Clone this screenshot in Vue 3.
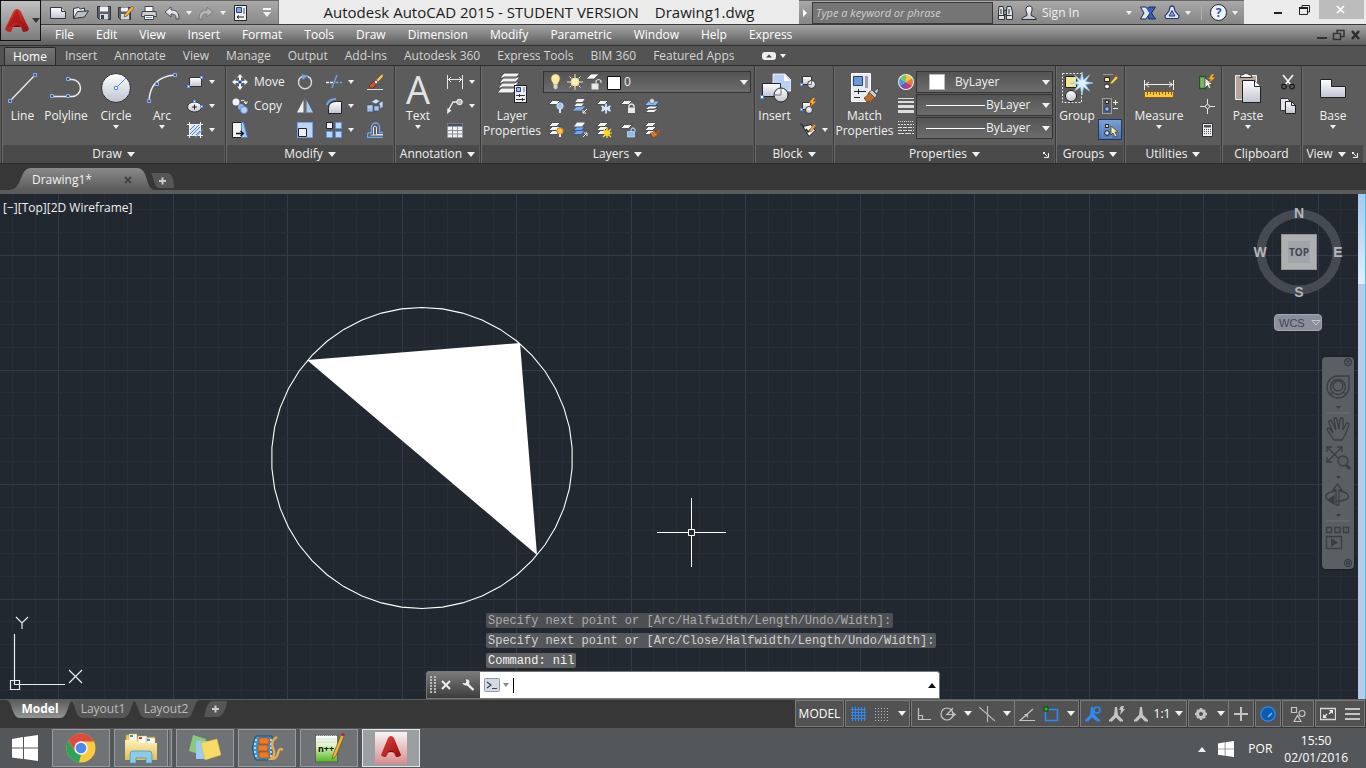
<template>
  <div class="desktop">
    <header class="top">
      <button class="app-button" aria-label="Application menu">
        <svg class="app-logo"><use href="#i-logo" /></svg>
        <span class="caret dark"></span>
      </button>
      <div class="top-rows">
        <div class="title-row">
          <div class="quick">
            <button v-for="q in quickTools" :key="q.icon" :class="['quick-btn', { 'with-caret': q.caret }]" :aria-label="q.name">
              <svg class="ic"><use :href="'#i-' + q.icon" /></svg>
              <span v-if="q.caret" class="caret small"></span>
            </button>
            <button class="quick-more" aria-label="Customize toolbar"><span class="bar"></span><span class="caret"></span></button>
          </div>
          <h1 class="title"><span>Autodesk AutoCAD 2015 - STUDENT VERSION</span><span>Drawing1.dwg</span></h1>
          <div class="info">
            <span class="info-toggle"></span>
            <input class="search" type="text" placeholder="Type a keyword or phrase" aria-label="Search" />
            <button class="info-btn" aria-label="Find"><svg class="ic"><use href="#i-find" /></svg></button>
            <button class="sign-in"><svg class="ic"><use href="#i-user" /></svg><span>Sign In</span><span class="caret small"></span></button>
            <button class="info-btn" aria-label="Exchange"><svg class="ic"><use href="#i-exchange" /></svg></button>
            <button class="info-btn wide" aria-label="Stay connected"><svg class="ic"><use href="#i-a360" /></svg><span class="caret small"></span></button>
            <span class="info-sep"></span>
            <button class="info-btn wide" aria-label="Help"><span class="help">?</span><span class="caret small"></span></button>
          </div>
          <div class="win-buttons">
            <button aria-label="Minimize"><svg class="ic"><path d="M4 10h8v2H4z" fill="#222" /></svg></button>
            <button aria-label="Restore"><svg class="ic"><path d="M3.500 5.500h8v7h-8zM6 5V3.500h7.500V10H12" fill="none" stroke="#222" /><path d="M3 5h9v2H3z" fill="#222" /></svg></button>
            <button class="close" aria-label="Close"><svg class="ic"><path d="M4 4l7 7M11 4l-7 7" stroke="#fff" stroke-width="1.600" /></svg></button>
          </div>
        </div>
        <nav class="menu-row">
          <a v-for="m in menus" :key="m" href="#">{{ m }}</a>
          <div class="mdi">
            <svg viewBox="0 0 44 12"><path d="M0 8h10v2H0z" fill="#333" /><path d="M16.500 4.500h7v6h-7zM20 4V1.500h7v6h-3" fill="none" stroke="#333" stroke-width="1.500" /><path d="M35 2l7 8M42 2l-7 8" stroke="#2c2c2c" stroke-width="2.500" /></svg>
          </div>
        </nav>
      </div>
    </header>

    <nav class="ribbon-tabs">
      <a v-for="(t, i) in ribbonTabs" :key="t" href="#" :class="{ active: i === 0 }">{{ t }}</a>
      <button class="ribbon-min" aria-label="Minimize ribbon">
        <svg viewBox="0 0 14 8"><rect width="14" height="8" rx="3" fill="#eee" /><path d="M4 5.500l3-3 3 3z" fill="#444" /></svg>
        <span class="caret small"></span>
      </button>
    </nav>

    <section class="ribbon">
      <div v-for="p in panels" :key="p.name" :class="['panel', p.id]">
        <div class="panel-body">
          <template v-for="(part, n) in p.parts" :key="n">
            <button v-if="part.big" class="big">
              <span v-if="part.big === 'text'" class="glyph">A</span>
              <svg v-else class="ic-big"><use :href="'#b-' + part.big" /></svg>
              <span class="big-label">{{ part.label }}</span>
              <span v-if="part.caret" class="caret small"></span>
            </button>
            <div v-else-if="part.col" class="col">
              <button v-for="c in part.col" :key="c.icon" :class="['tool', { on: c.on }]" :aria-label="c.icon">
                <svg class="ic"><use :href="'#i-' + c.icon" /></svg>
                <span v-if="c.label">{{ c.label }}</span>
                <span v-if="c.caret" class="caret small"></span>
              </button>
            </div>
            <div v-else-if="part.layers" class="layer-tools">
              <div class="combo">
                <svg class="layer-state"><use href="#layer-state" /></svg>
                <select aria-label="Layer"><option>0</option></select>
                <span class="caret"></span>
              </div>
              <div class="layer-grid">
                <button v-for="l in layerTools" :key="l" class="tool" :aria-label="l">
                  <svg class="ic"><use :href="'#i-' + l" /></svg>
                </button>
              </div>
            </div>
            <div v-else class="props">
              <div v-for="r in propRows" :key="r.icon" class="prop">
                <svg class="ic"><use :href="'#i-' + r.icon" /></svg>
                <div class="combo">
                  <span :class="r.sample"></span>
                  <select :aria-label="r.name"><option>ByLayer</option></select>
                  <span class="caret"></span>
                </div>
              </div>
            </div>
          </template>
        </div>
        <div class="panel-title">
          <span>{{ p.name }}</span>
          <span v-if="!p.plain" class="caret"></span>
          <svg v-if="p.launcher" class="launcher" viewBox="0 0 6 6"><path d="M0 .5h2M.5 0v2M1 1l3.500 3.500M5.500 1v4.500H1" fill="none" stroke="#eee" /></svg>
        </div>
      </div>
    </section>

    <div class="file-tabs">
      <button class="file-tab">
        <svg class="shape" viewBox="0 0 146 22" preserveAspectRatio="none"><path d="M0 22C14 22 10 0 22 0H128C140 0 136 22 146 22z" fill="url(#g-tab)" /></svg>
        <span>Drawing1*</span>
        <svg class="tab-close" viewBox="0 0 8 8"><path d="M1 1l6 6M7 1L1 7" stroke="#444" stroke-width="2" /></svg>
      </button>
      <button class="new-tab" aria-label="New drawing">
        <svg viewBox="0 0 24 15"><path d="M0 0H16C21 0 23 6 23 15H8C3 15 3 5 0 0z" fill="#565656" /><path d="M8 8h7M11.500 4.500v7" stroke="#ccc" stroke-width="2" /></svg>
      </button>
    </div>

    <main class="canvas">
      <svg class="drawing">
        <g shape-rendering="crispEdges">
          <line v-for="g in gridX" :key="'x' + g.at" :x1="g.at" :x2="g.at" y1="0" y2="100%" :stroke="g.major ? '#343a4a' : '#282e39'" />
          <line v-for="g in gridY" :key="'y' + g.at" :y1="g.at" :y2="g.at" x1="0" x2="100%" :stroke="g.major ? '#343a4a' : '#282e39'" />
        </g>
        <polygon :points="circlePoints" fill="none" stroke="#fff" stroke-width="1.100" />
        <polygon points="307,166 520,149 537,361" fill="#fff" />
        <path d="M657 338.500H688M695 338.500H726M691.500 304V335M691.500 342V373M688.500 335.500h6v6h-6z" fill="none" stroke="#fff" />
      </svg>
      <button class="view-label">[−][Top][2D Wireframe]</button>

      <svg class="ucs" viewBox="0 0 90 84"><path d="M14.500 19V70M14 69.500H65M10.500 65.500h9v9h-9z M16 2l6 6 6-6M22 8v6M69 55l13 13M82 55L69 68" fill="none" stroke="#e8ecec" stroke-width="1.200" /></svg>

      <div class="view-cube">
        <svg viewBox="0 0 100 94">
          <circle cx="50" cy="47" r="38" fill="none" stroke="#464b53" stroke-width="9" />
          <rect x="32.500" y="29.500" width="35" height="35" fill="#adb0b1" stroke="#8f9394" />
          <rect x="39" y="36" width="22" height="22" fill="#9fa5aa" />
          <text x="50" y="51" class="cube-face">TOP</text>
          <text x="50" y="13" class="compass">N</text>
          <text x="50" y="92" class="compass">S</text>
          <text x="11" y="52" class="compass">W</text>
          <text x="89" y="52" class="compass">E</text>
        </svg>
        <button class="wcs">WCS<svg viewBox="0 0 10 6"><path d="M1 .5h8L5 5z" fill="none" stroke="#c5c7d0" /></svg></button>
      </div>

      <div class="nav-bar">
        <svg viewBox="0 0 32 212" fill="none" stroke="#393e45" stroke-width="1.300">
          <circle cx="26" cy="5" r="3.500" /><path d="M24.500 3.500l3 3M27.500 3.500l-3 3" />
          <path d="M5 30a11 11 0 0 1 11-11h11v11a11 11 0 0 1-22 0z" /><circle cx="16" cy="30" r="7.500" /><circle cx="16" cy="29" r="5" /><path d="M11 35l-3 3M21 35l3 3" />
          <path d="M14 49h5l-2.500 3z" fill="#393e45" stroke="none" />
          <path d="M4 56h24M4 164h24" stroke="#6b7075" stroke-width="1" />
          <path d="M12 83L6 74c-2-3 0-4 2-2l3 4-4-10c-1-3 2-4 3-1l4 8-2-10c0-3 3-3 3 0l2 9 1-9c0-3 3-3 3 0v10l3-6c1-2 4-1 3 1l-4 10-3 5z" />
          <path d="M5 90l15 15M20 90L5 105M5 95v-5h5M15 90h5v5M5 100v5h5" /><circle cx="21" cy="104" r="5" fill="#575c60" /><path d="M24 108l4 4" stroke-width="3" />
          <path d="M14 119h5l-2.500 3z" fill="#393e45" stroke="none" />
          <path d="M14 148v-15h-3l4.500-6 4.500 6h-3v15z" /><path d="M14 134c-14 2-12 9-3 10M18 134c12 2 12 10-4 10" /><path d="M6 143l6-4v8z" fill="#393e45" />
          <path d="M14 157h5l-2.500 3z" fill="#393e45" stroke="none" />
          <path d="M4.500 170.500h5v5h-5zM13 170.500h5v5h-5zM21.500 170.500h5v5h-5zM4.500 179.500h15v12h-15z" /><path d="M9 181l7 4.500-7 4.500z" fill="#393e45" stroke="none" />
          <circle cx="26" cy="206" r="3.500" /><path d="M24 205h4M24 207h4" />
        </svg>
      </div>

      <div class="command">
        <p v-for="(h, i) in history" :key="h" :class="['history', 'age' + i]">{{ h }}</p>
        <div class="command-bar">
          <div class="command-handle">
            <svg class="grip" viewBox="0 0 6 18"><path d="M1 0v18M5 0v18" stroke="#bbb" stroke-width="2" stroke-dasharray="2 1" /></svg>
            <svg class="cmd-x" viewBox="0 0 10 10"><path d="M1 1l8 8M9 1L1 9" stroke="#eee" stroke-width="2" /></svg>
            <svg class="ic"><use href="#i-wrench" /></svg>
          </div>
          <svg class="prompt" viewBox="0 0 16 14"><rect x=".5" y=".5" width="15" height="13" rx="1" fill="#d5dbe3" stroke="#8f9aa8" /><path d="M3 4l4 3-4 3M8 10.500h5" fill="none" stroke="#3d4654" stroke-width="1.200" /></svg>
          <span class="caret small grey"></span>
          <span class="text-cursor"></span>
          <input type="text" aria-label="Command line" />
          <span class="caret up"></span>
        </div>
      </div>
      <div class="window-edge"></div>
    </main>

    <footer class="status">
      <div class="layout-tabs">
        <button v-for="(l, i) in layouts" :key="l" :class="['layout-tab', { active: i === 0 }]">
          <svg class="shape" viewBox="0 0 68 18" preserveAspectRatio="none"><path d="M0 0C7 0 5 18 14 18H54C63 18 61 0 68 0z" :fill="i === 0 ? 'url(#g-model)' : '#565656'" /></svg>
          <span>{{ l }}</span>
        </button>
        <button class="new-layout" aria-label="New layout">
          <svg viewBox="0 0 24 17"><path d="M9 0H24C23 8 20 16 14 16H1C3 10 3 2 9 0z" fill="#565656" /><path d="M9 8h7M12.500 4.500v7" stroke="#ccc" stroke-width="2" /></svg>
        </button>
      </div>
      <div class="status-groups">
        <div v-for="(g, i) in statusGroups" :key="i" class="status-group">
          <template v-for="(s, k) in g" :key="k">
            <span v-if="s === '|'" class="divider"></span>
            <button v-else-if="s === 'v'" class="drop" aria-label="More"><span class="caret"></span></button>
            <button v-else-if="s.text" :class="['status-text', { narrow: s.text === '1:1' }]">{{ s.text }}</button>
            <button v-else :class="['status-btn', s]" :aria-label="s"><svg class="ic"><use :href="'#s-' + s" /></svg></button>
          </template>
        </div>
      </div>
    </footer>

    <footer class="taskbar">
      <button class="start" aria-label="Start"><svg viewBox="0 0 26 26"><use href="#i-windows" /></svg></button>
      <div class="tasks">
        <button v-for="t in tasks" :key="t" :class="['task', t]" :aria-label="t">
          <svg viewBox="0 0 32 32">
            <use :href="'#t-' + t" />
            <text v-if="t === 'notepad'" x="13" y="20" class="notepad-text">n++</text>
          </svg>
        </button>
      </div>
      <div class="tray">
        <span class="caret up light"></span>
        <svg class="ic" viewBox="0 0 26 26"><use href="#i-windows" /></svg>
        <span class="lang">POR</span>
        <div class="clock"><time>15:50</time><time>02/01/2016</time></div>
      </div>
    </footer>

    <svg class="defs" aria-hidden="true">
      <defs>
        <linearGradient id="g-white" x2="0" y2="1"><stop stop-color="#fff" /><stop offset="1" stop-color="#bfc4d2" /></linearGradient>
        <linearGradient id="g-blue" x2="0" y2="1"><stop stop-color="#e4eefb" /><stop offset="1" stop-color="#8db4e6" /></linearGradient>
        <linearGradient id="g-red" x2="1" y2="1"><stop stop-color="#e8443c" /><stop offset="1" stop-color="#8e0d10" /></linearGradient>
        <linearGradient id="g-tab" x2="0" y2="1"><stop stop-color="#8a8a8a" /><stop offset="1" stop-color="#5c5c5c" /></linearGradient>
        <linearGradient id="g-model" x2="0" y2="1"><stop stop-color="#5c5c5c" /><stop offset="1" stop-color="#949494" /></linearGradient>
        <linearGradient id="g-gold" x2="0" y2="1"><stop stop-color="#fdf3b8" /><stop offset="1" stop-color="#e3bc55" /></linearGradient>
        <linearGradient id="g-pink" x2="0" y2="1"><stop stop-color="#f6f4f4" /><stop offset="1" stop-color="#d68e90" /></linearGradient>
        <linearGradient id="g-green" x2="0" y2="1"><stop stop-color="#fff" /><stop offset=".4" stop-color="#dff2c4" /><stop offset="1" stop-color="#4fb81f" /></linearGradient>
      </defs>

      <symbol id="i-logo" viewBox="0 0 24 26">
        <path d="M0 21L8.500 3q3.500-4 7 0L24 21q-1 3-6 3l-2-5q-4-2-8 0l-2 5q-5 0-6-3z" fill="url(#g-red)" />
        <path d="M12 1L5 14l-4 7 9-6 4 0 8 6-7-9z" fill="#a80f12" opacity=".6" /><path d="M8 19q4-4 8 0z" fill="#7e0b0d" />
      </symbol>
      <symbol id="i-new" viewBox="0 0 16 16"><path d="M.5 2.500h11l4 4v7H.5z" fill="url(#g-white)" stroke="#33363c" /><path d="M11.500 2.500v4h4" fill="#d8dbe2" stroke="#33363c" /></symbol>
      <symbol id="i-open" viewBox="0 0 16 16"><path d="M.5 13.500v-10l5-1 2 1.500 4-1v4" fill="#e8ebef" stroke="#33363c" /><path d="M.5 13.500l4-7 11-.5-4 6z" fill="#b8bec8" stroke="#33363c" /></symbol>
      <symbol id="i-save" viewBox="0 0 16 16"><path d="M1.500 1.500h13v13h-11l-2-2z" fill="#59606c" stroke="#33363c" /><path d="M4 1.500h8v5H4z" fill="#eef0f4" /><path d="M4 9h8v5.500H4z" fill="#d5d9e0" /><path d="M5 10h3v4H5z" fill="#3c4149" /></symbol>
      <symbol id="i-saveas" viewBox="0 0 16 16"><path d="M.5 2.500h12v12h-10l-2-2z" fill="#59606c" stroke="#33363c" /><path d="M3 2.500h7v4H3z" fill="#eef0f4" /><path d="M3 9h8v5.500H3z" fill="#d5d9e0" /><path d="M6 12l1-3 7-8 2 2-7 8z" fill="#f4b54a" stroke="#7c4c16" stroke-width=".7" /></symbol>
      <symbol id="i-print" viewBox="0 0 16 16"><path d="M4 1.500h8v5H4z" fill="#fff" stroke="#444" /><path d="M1 6.500h14l.5 5H.5z" fill="#c9ced7" stroke="#444" /><path d="M3.500 10.500h9v4h-9z" fill="#fff" stroke="#444" /><path d="M5 12.500h6" stroke="#6d99d8" /></symbol>
      <symbol id="i-undo" viewBox="0 0 16 16"><path d="M1 7l6-5v3c6 0 8 3 8 9h-3c0-4-1-5-5-5v3z" fill="url(#g-white)" stroke="#44474d" stroke-width=".9" /></symbol>
      <symbol id="i-redo" viewBox="0 0 16 16"><path d="M15 7L9 2v3c-6 0-8 3-8 9h3c0-4 1-5 5-5v3z" fill="#b4b4b4" stroke="#777" stroke-width=".9" /></symbol>
      <symbol id="i-workspace" viewBox="0 0 16 16"><path d="M2.500.5h12v15h-12z" fill="#eef0f5" stroke="#222" /><path d="M4.500 2.500h5v5h-5z" fill="#7fa5dc" stroke="#29436e" /><path d="M11 3h2v6h-2z" fill="#9aa2b0" /><path d="M5 12h7M5 12l2-1.500M5 12l2 1.500" stroke="#222" fill="none" /></symbol>

      <symbol id="i-find" viewBox="0 0 16 16"><path d="M2 1.500h4L7.500 7v7.500h-6V7zM10 1.500h4L15.500 7v7.500h-6V7z" fill="#dfe2e8" stroke="#2f333a" /><path d="M6.500 5.500h3v4h-3z" fill="#8c929c" stroke="#2f333a" /><path d="M1.500 10.500h6M9.500 10.500h5M4 4v5M12 4v5" stroke="#2f333a" /></symbol>
      <symbol id="i-user" viewBox="0 0 16 16"><path d="M.5 14.500q1-3 5.500-4V9Q3 1.500 8 1t2 8v1.500q4.500 1 5.500 4z" fill="url(#g-white)" stroke="#2f333a" /></symbol>
      <symbol id="i-exchange" viewBox="0 0 16 16"><path d="M9 2h6.500l-4 6 4 6H9L6 8z" fill="#3460bd" stroke="#1b2c55" /><path d="M.5 2H6l4 6-4 6H.500L4 8z" fill="#dfe6f4" stroke="#1b2c55" /><path d="M6 2h2l3 5-1 2z" fill="#3460bd" /></symbol>
      <symbol id="i-a360" viewBox="0 0 16 16"><path d="M6 2q2-2 4 0l1 4 4 5q0 3-3 2.500H4Q1 14 1 11l4-5z" fill="#e2e6f0" stroke="#223a78" stroke-width="1.200" /><path d="M8 5.500l3 5.500H5z" fill="#8ba3d6" stroke="#223a78" /></symbol>
      <symbol id="i-wrench" viewBox="0 0 16 16"><path d="M2 5l3 1 1-1-1-3q4-1 5 3l-.5 2 5 5q0 2-2 2L7 9Q2 9 2 5z" fill="#e9edf2" stroke="#333" stroke-width=".6" /></symbol>
      <symbol id="i-windows" viewBox="0 0 26 26"><path d="M0 4l11-2v10.500H0zM12 2l14-2v12.500H12zM0 13.500h11V24L0 22.500zM12 13.500h14V26l-14-2z" fill="#fff" /></symbol>

      <symbol id="b-line" viewBox="0 0 32 32"><path d="M3 29L28 3" stroke="#eee" stroke-width="1.300" /><path d="M1.500 27.500h3v3h-3zM26.500 1.500h3v3h-3z" fill="#3b5377" stroke="#86b2f5" /></symbol>
      <symbol id="b-polyline" viewBox="0 0 32 32"><path d="M18 7.500h4a8 8 0 0 1 0 17H2" fill="none" stroke="#eee" stroke-width="1.500" /><path d="M.5 22.500h3v3h-3zM16.500 22.500h3v3h-3zM16.500 5.500h3v3h-3z" fill="#3b5377" stroke="#86b2f5" /></symbol>
      <symbol id="b-circle" viewBox="0 0 32 32"><circle cx="16" cy="16" r="14.500" fill="url(#g-white)" stroke="#2c2f35" /><path d="M16 16L26 6" stroke="#4c8cf0" /><path d="M14.500 14.500h3v3h-3z" fill="#fff" stroke="#4c8cf0" /></symbol>
      <symbol id="b-arc" viewBox="0 0 32 32"><path d="M3 29Q4 5 29 3" fill="none" stroke="#eee" stroke-width="1.500" /><path d="M1.500 27.500h3v3h-3zM9.500 10.500h3v3h-3zM27.500 1.500h3v3h-3z" fill="#3b5377" stroke="#86b2f5" /></symbol>
      <symbol id="b-layers" viewBox="0 0 32 32"><path d="M1 21l5-6h16l-5 6zM2 16l5-6h16l-5 6zM3 11l5-6h16l-5 6zM4 6l4-5h16l-4 5z" fill="#f3f3f3" stroke="#484848" /><rect x="18.500" y="13.500" width="12" height="17" fill="#eceef4" stroke="#222" /><path d="M20.500 15.500h4v4h-4z" fill="#9dbbe8" stroke="#29436e" /><path d="M27 15h2v5h-2z" fill="#a6acb8" /><path d="M20 23.500h9M20 27.500h9M23.500 22v3M26.500 26v3" stroke="#333" /></symbol>
      <symbol id="b-insert" viewBox="0 0 32 32"><path d="M14 2h12l6 6v11H14z" fill="#b9d0f2" stroke="#fff" stroke-width=".8" /><path d="M25 2v7h6" fill="#fff" /><path d="M3.500 11.500h18v13h-18z" fill="url(#g-white)" stroke="#25272c" /><circle cx="22" cy="23" r="7" fill="url(#g-white)" stroke="#25272c" /><path d="M22 16v7h-6" fill="none" stroke="#777" /><path d="M1.500 23.500h3v3h-3z" fill="#fff" stroke="#4c8cf0" /></symbol>
      <symbol id="b-match" viewBox="0 0 32 32"><path d="M2.500 1.500h19v28h-19z" fill="#e9ebf1" stroke="#fff" /><path d="M4.500 4.500h9v9h-9z" fill="#6b99da" stroke="#263f6b" /><path d="M16 4h3v12h-3z" fill="#9aa1b0" /><path d="M5 19.500h12M5 25.500h6M9.500 17v5" stroke="#222" /><path d="M15 26q4-2 5-6l6 6q-3 4-8 4z" fill="#b96d2a" stroke="#5b2e0c" stroke-width=".7" /><path d="M20 20l3-2 5 5-2 3zM25 19l5-3-2 6z" fill="#c9ccd2" stroke="#333" stroke-width=".6" /></symbol>
      <symbol id="b-group" viewBox="0 0 32 32"><path d="M1.500 1.500h19v29h-19z" fill="none" stroke="#e6e6e6" stroke-dasharray="2 1.500" /><path d="M4.500 4.500h11v11h-11z" fill="#f5e695" stroke="#222" /><circle cx="10" cy="24" r="5.500" fill="url(#g-white)" stroke="#222" /><path d="M21 0l1.500 8 6-5-4 6.500 8 1.500-8 1.500 4 6.500-6-4L21 23l-1.500-8-6 4 4-6.500-8-1.500 8-1.500-4-6.500 6 5z" fill="#d9f0ff" stroke="#8cc8f4" stroke-width=".7" /></symbol>
      <symbol id="b-measure" viewBox="0 0 32 32"><path d="M1.500 8v10M30.500 8v10M2 12.500h28M6 10l-3.500 2.500L6 15M26 10l3.500 2.500L26 15" fill="none" stroke="#f0f0f0" /><path d="M1.500 19.500h29v6h-29z" fill="#f5c944" stroke="#8d5c12" /><path d="M4.500 20v3M7.500 20v2M10.500 20v3M13.500 20v2M16.500 20v3M19.500 20v2M22.500 20v3M25.500 20v2M28.500 20v3" stroke="#8d5c12" /></symbol>
      <symbol id="b-paste" viewBox="0 0 32 32"><path d="M3.500 3.500h21v24h-21z" fill="#b3a597" stroke="#eee" /><path d="M8 5.500q0-3 3-3 3-3 6 0 3 0 3 3z" fill="#f2f2f2" stroke="#333" /><path d="M10.500 8.500h12l6 6v16h-18z" fill="url(#g-white)" stroke="#1f2126" /><path d="M22.500 8.500v6h6" fill="#fff" stroke="#1f2126" /></symbol>
      <symbol id="b-base" viewBox="0 0 32 32"><path d="M3.500 7.500h11v7h14v11h-25z" fill="url(#g-white)" stroke="#222" /></symbol>

      <symbol id="i-rect" viewBox="0 0 16 16"><path d="M2.500 3.500h12v9h-12z" fill="url(#g-white)" stroke="#333" /><path d="M.5 11.500h2v2h-2zM13.500 2.500h2v2h-2z" fill="#fff" stroke="#5b99f2" /></symbol>
      <symbol id="i-ellipse" viewBox="0 0 16 16"><ellipse cx="7.500" cy="9" rx="7" ry="5" fill="url(#g-white)" stroke="#333" /><path d="M5 9h5M7.500 6.500v5" stroke="#222" /><path d="M6.500 2.500h2v2h-2zM13.500 7.500h2v2h-2z" fill="#fff" stroke="#5b99f2" /></symbol>
      <symbol id="i-hatch" viewBox="0 0 16 16"><path d="M3 3h10v10H3z" fill="#dbe6f8" /><path d="M3 8l5-5M3 12l9-9M5 13l8-8M9 13l4-4" stroke="#5b86cc" /><path d="M0 2.500h16M0 13.500h16M2.500 0v16M13.500 0v16" stroke="#eee" /><path d="M8 16L16 7" stroke="#5b99f2" /></symbol>

      <symbol id="i-move" viewBox="0 0 16 16"><path d="M8 0l3 3.500H9V6H7V3.500H5zM8 16l3-3.500H9V10H7v2.500H5zM0 8l3.500-3v2H6v2H3.500v2zM16 8l-3.500-3v2H10v2h2.500v2z" fill="#f0f0f0" /><path d="M6.500 6.500h3v3h-3z" fill="#30405c" stroke="#6fa6f4" /></symbol>
      <symbol id="i-copy" viewBox="0 0 16 16"><circle cx="4" cy="4" r="3.500" fill="#f0f1f4" /><circle cx="9" cy="9" r="3" fill="#8bb3ea" /><circle cx="12" cy="12" r="3.500" fill="#b6cff2" stroke="#5b8fd8" /><path d="M9 2.500q4-1 5 3M12 4l2 2 1.500-2.500" fill="none" stroke="#eee" /></symbol>
      <symbol id="i-stretch" viewBox="0 0 16 16"><path d="M.5.500h9v15h-9z" fill="#f2f3f6" stroke="#222" /><path d="M9.500.500h2L15.500 15.500h-6z" fill="#a5cbf4" stroke="#4d86cc" /><path d="M4 11.500h7M8.500 9l3 2.500-3 2.500" fill="none" stroke="#111" stroke-width="1.300" /></symbol>
      <symbol id="i-rotate" viewBox="0 0 16 16"><path d="M11 2.500a6.500 6.500 0 1 1-6 0" fill="none" stroke="#d6d8dc" stroke-width="1.500" /><path d="M5 2.500q3-1.500 6 0" fill="none" stroke="#6fa6f4" stroke-width="1.500" /><path d="M5 0l5 2.500L5.500 6z" fill="#6fa6f4" /></symbol>
      <symbol id="i-mirror" viewBox="0 0 16 16"><path d="M6.500 2v12.500H0z" fill="#eceef2" /><path d="M9.500 2v12.500H16z" fill="#a5cbf4" /><path d="M8 0v16" stroke="#777" /></symbol>
      <symbol id="i-scale" viewBox="0 0 16 16"><path d="M.5.500h15v15H.5z" fill="#bdd4f3" stroke="#6fa6f4" /><path d="M1.500 6.500h8v8h-8z" fill="#eef0f5" stroke="#222" /></symbol>
      <symbol id="i-trim" viewBox="0 0 16 16"><path d="M0 8.500h3M4 8.500h3" stroke="#eee" stroke-width="1.500" /><path d="M6 14L11 1M9.500 8.500h3M14 8.500h2" stroke="#6fa6f4" stroke-width="1.300" /></symbol>
      <symbol id="i-fillet" viewBox="0 0 16 16"><path d="M2.500 15.500v-5q0-7 8-7h5v12z" fill="url(#g-white)" stroke="#222" /><path d="M.8 7Q3 1 10 1" fill="none" stroke="#6fa6f4" stroke-width="1.800" /></symbol>
      <symbol id="i-array" viewBox="0 0 16 16"><path d="M.5.500h6v6h-6z" fill="#eef0f5" stroke="#222" /><path d="M9.500.500h6v6h-6zM.5 9.500h6v6h-6zM9.500 9.500h6v6h-6z" fill="#bdd4f3" stroke="#5b95e6" /></symbol>
      <symbol id="i-erase" viewBox="0 0 16 16"><path d="M0 15.500h16" stroke="#ddd" /><path d="M9 6l6-6h1v3l-5 5z" fill="#f3c067" stroke="#7c4c16" stroke-width=".6" /><path d="M7 8l2-2 2 2-2 2.500z" fill="#eee" stroke="#333" stroke-width=".6" /><path d="M2 12l4.500-4.500L9 10.500 6 14q-3 1-4-2z" fill="#d9532c" stroke="#511" stroke-width=".6" /></symbol>
      <symbol id="i-explode" viewBox="0 0 16 16"><path d="M0 7h6v7H0zM7 8h5v5H7zM12 5l4-2v6l-3 2zM4 4l5-3 4 2-4 3z" fill="url(#g-blue)" stroke="#456" stroke-width=".6" /></symbol>
      <symbol id="i-offset" viewBox="0 0 16 16"><path d="M16 15.500H.500v-3q0-2 4-2V5a4 4 0 0 1 8 0v5.500h3.500" fill="none" stroke="#6fa6f4" stroke-width="1.300" /><path d="M16 13H3.500M16 12.500H9.500V5q-1.500-2-3 0v7.500" fill="none" stroke="#e4e6ea" /></symbol>
      <symbol id="i-dim" viewBox="0 0 16 16"><path d="M.5 1v14M15.500 1v14M1 5.500h14M4 3L1.500 5.500 4 8M12 3l2.500 2.500L12 8" fill="none" stroke="#e4e4e4" /></symbol>
      <symbol id="i-leader" viewBox="0 0 16 16"><path d="M1 13l5-9h4" fill="none" stroke="#eee" stroke-width="1.400" /><path d="M0 16l.5-6 4 2.500z" fill="#eee" /><circle cx="12.500" cy="4" r="2.800" fill="#bbb" stroke="#f4f4f4" /></symbol>
      <symbol id="i-table" viewBox="0 0 16 16"><path d="M.5 1.500h15v14H.5z" fill="#eef0f3" stroke="#999" /><path d="M.5 1.500h15v3H.5z" fill="#465063" /><path d="M0 8.500h16M0 12h16M5.500 5v11M10.500 5v11" stroke="#8b9099" /></symbol>

      <symbol id="slab" viewBox="0 0 16 16"><path d="M.5 6.500l4-4h8l-4 4z" fill="#f4f4f4" stroke="#404040" stroke-width=".8" /></symbol>
      <symbol id="slabs" viewBox="0 0 16 16"><path d="M.5 12.500l4-4h8l-4 4zM.5 8.500l4-4h8l-4 4zM.5 4.500l4-4h8l-4 4z" fill="#f4f4f4" stroke="#404040" stroke-width=".8" /></symbol>
      <symbol id="i-lay-off" viewBox="0 0 16 16"><use href="#slab" width="16" height="16" /><circle cx="12" cy="8" r="3.200" fill="#9cc6f6" stroke="#e4f0ff" stroke-width=".7" /><path d="M11 11h2v4h-2z" fill="#dbe3ee" /></symbol>
      <symbol id="i-lay-iso" viewBox="0 0 16 16"><path d="M1 12.500l4-4h8l-4 4z" fill="#7fb2f4" /><path d="M1.500 8.500l3-3.500h8l-3 3.500zM2.500 4.500l3-4h8l-3 4z" fill="#f4f4f4" stroke="#404040" stroke-width=".7" /><path d="M15 11l-4 4M11 12v3h3" fill="none" stroke="#eee" /></symbol>
      <symbol id="i-lay-freeze" viewBox="0 0 16 16"><use href="#slab" width="16" height="16" /><path d="M10 5.500v10M5.500 8l9 5M14.500 8l-9 5M6 10.500h8" stroke="#cfe4fd" stroke-width="1.800" /></symbol>
      <symbol id="i-lay-lock" viewBox="0 0 16 16"><use href="#slab" width="16" height="16" /><path d="M9 9.500V7.500q2.500-3 5 0v2" fill="none" stroke="#eee" stroke-width="1.300" /><path d="M8 9.500h7V15H8z" fill="#e8e8e8" /></symbol>
      <symbol id="i-lay-current" viewBox="0 0 16 16"><path d="M1 14.500l4-3.500h9l-4 3.500zM1 11.500l4-3.500h9l-4 3.500z" fill="#f4f4f4" stroke="#404040" stroke-width=".8" /><path d="M.5 7.500l4-4.500h11l-4 4.500z" fill="#8dbaf5" stroke="#2c4a7a" stroke-width=".8" /><circle cx="8" cy="3" r="2.500" fill="#ddd" stroke="#555" stroke-width=".6" /></symbol>
      <symbol id="i-lay-on" viewBox="0 0 16 16"><use href="#slabs" width="16" height="16" /><circle cx="12" cy="9" r="3.200" fill="#ffc14a" stroke="#e07c12" /><path d="M11 12h2v3h-2z" fill="#eee" /></symbol>
      <symbol id="i-lay-uniso" viewBox="0 0 16 16"><path d="M1 12.500l4-4h8l-4 4zM1.500 8.500l3-3.500h8l-3 3.500z" fill="#6ea7f2" stroke="#2c4a7a" stroke-width=".6" /><path d="M2 4.500l3-4h8l-3 4z" fill="#f4f4f4" /><path d="M11 15l4-4M12 11h3v3" fill="none" stroke="#eee" /></symbol>
      <symbol id="i-lay-thaw" viewBox="0 0 16 16"><use href="#slabs" width="16" height="16" /><path d="M11 5.500v11M5.500 11h11M7 7l8 8M15 7l-8 8" stroke="#ffe14a" stroke-width="1.200" /><circle cx="11" cy="11" r="3" fill="#ffd51e" /></symbol>
      <symbol id="i-lay-unlock" viewBox="0 0 16 16"><use href="#slab" width="16" height="16" /><path d="M11 9.500V7.500q2-3 4 0v2" fill="none" stroke="#9cc6f6" stroke-width="1.300" /><path d="M7.500 9.500h7V15h-7z" fill="#8dbaf5" stroke="#dce9fb" stroke-width=".6" /></symbol>
      <symbol id="i-lay-match" viewBox="0 0 16 16"><use href="#slabs" width="16" height="16" /><path d="M6 11q3 0 4-2l4 3q-2 4-5 3.500z" fill="#d27a2a" stroke="#5b2e0c" stroke-width=".5" /><path d="M12 10l4-3-1 5z" fill="#b65c1c" /></symbol>
      <symbol id="layer-state" viewBox="0 0 80 20">
        <path d="M11.500 2a4.500 4.500 0 0 1 4.500 4.500c0 3-2 3.500-2.500 6.500h-4C9 10 7 9.500 7 6.500A4.500 4.500 0 0 1 11.500 2z" fill="#fbe9a6" stroke="#8b7a45" stroke-width=".6" /><path d="M9.500 13h4v3l-2 1.500-2-1.500z" fill="#d5d5d5" />
        <path d="M31 2v4M31 14v4M23 10h4M35 10h4M25.500 4.500l2 2M36.500 4.500l-2 2M25.500 15.500l2-2M36.500 15.500l-2-2" stroke="#e6e3d8" /><circle cx="31" cy="10" r="4" fill="#fff0ae" stroke="#ead9a0" />
        <path d="M42 7l5-5h8l-5 5z" fill="#f4f4f4" stroke="#3c3c3c" stroke-width=".6" /><path d="M52 11.500V9q2.500-3 5 0v2" fill="none" stroke="#ddd" stroke-width="1.200" /><path d="M47.500 11.500h7v6h-7z" fill="#e8e8e8" />
        <path d="M63.500 4.500h13v13h-13z" fill="#fff" stroke="#111" />
      </symbol>

      <symbol id="i-blk-new" viewBox="0 0 16 16"><path d="M2.500 2.500h9v8h-9z" fill="url(#g-white)" stroke="#333" /><circle cx="11.500" cy="10.500" r="4" fill="url(#g-white)" stroke="#333" /><path d="M11.500 7v3.500H8" fill="none" stroke="#777" /><path d="M.5 9.500h2v2h-2z" fill="#fff" stroke="#5b99f2" /></symbol>
      <symbol id="i-blk-edit" viewBox="0 0 16 16"><path d="M2.500 4.500h8v7h-8z" fill="url(#g-white)" stroke="#333" /><circle cx="9" cy="12" r="3.500" fill="url(#g-white)" stroke="#333" /><path d="M13 0L9 5h3l-2 4 6-5.500h-3L15 0z" fill="#ffb62e" stroke="#c86a08" stroke-width=".5" /><path d="M.5 10.500h2v2h-2z" fill="#fff" stroke="#5b99f2" /></symbol>
      <symbol id="i-blk-attr" viewBox="0 0 16 16"><path d="M3 4.500l8-2 4 6-6 6z" fill="#f4f4f4" stroke="#222" /><path d="M0 2q3 0 4 4" fill="none" stroke="#222" /><path d="M6 7l2 3 3-3" fill="none" stroke="#222" stroke-width="1.400" /><path d="M9 9l5-7 2 1.500-5 6.500z" fill="#f0a046" stroke="#7c4c16" stroke-width=".5" /></symbol>
      <symbol id="i-wheel" viewBox="0 0 16 16"><circle cx="8" cy="8" r="8" fill="#eee" /><path d="M8 8V1a7 7 0 0 1 6 3.500z" fill="#f2c83a" /><path d="M8 8l6-3.500a7 7 0 0 1 0 7z" fill="#ea7a35" /><path d="M8 8l6 3.500A7 7 0 0 1 8 15z" fill="#c43d6e" /><path d="M8 8v7a7 7 0 0 1-6-3.500z" fill="#7b4bb5" /><path d="M8 8l-6 3.500a7 7 0 0 1 0-7z" fill="#4a9be0" /><path d="M8 8L2 4.500A7 7 0 0 1 8 1z" fill="#7fc653" /></symbol>
      <symbol id="i-weights" viewBox="0 0 16 16"><path d="M0 1.500h16" stroke="#ddd" /><path d="M0 5h16" stroke="#ddd" stroke-width="2" /><path d="M0 9.500h16" stroke="#ddd" stroke-width="3" /><path d="M0 14.500h16" stroke="#ddd" stroke-width="3" /></symbol>
      <symbol id="i-types" viewBox="0 0 16 16"><path d="M0 1.500h16" stroke="#ddd" stroke-dasharray="1 1" /><path d="M0 4.500h16" stroke="#ddd" stroke-dasharray="2 1" /><path d="M0 7.500h16M0 10.500h16" stroke="#ddd" stroke-dasharray="4 1" /><path d="M0 13.500h16" stroke="#ddd" stroke-dasharray="6 1" /></symbol>

      <symbol id="i-grp-edit" viewBox="0 0 16 16"><path d="M1.500.500h9" stroke="#ddd" stroke-dasharray="1 1" /><path d="M2.500 3.500h5v4h-5z" fill="#f5e695" stroke="#222" /><circle cx="5" cy="12.500" r="2.500" fill="#eef1f6" stroke="#222" /><path d="M8 9l6-7 2 2-6 6z" fill="#f7d64c" stroke="#7c4c16" stroke-width=".5" /><path d="M13 2l2-1 1 2z" fill="#d43" /></symbol>
      <symbol id="i-grp-add" viewBox="0 0 16 16"><path d="M.5.500h9v15h-9z" fill="none" stroke="#ddd" stroke-dasharray="1 1" /><path d="M3.500 2.500h3v3h-3z" fill="#ddd" stroke="#222" /><circle cx="5" cy="11" r="2.300" fill="#86b2f5" stroke="#1d3d78" /><path d="M11 4.500h5M13.500 2v5M11 10.500h5" stroke="#eee" /></symbol>
      <symbol id="i-grp-select" viewBox="0 0 16 16"><path d="M.5.500h9v15h-9z" fill="none" stroke="#6aa4ff" stroke-dasharray="1 1" /><path d="M3.500 2.500h3v3h-3z" fill="#f5e695" stroke="#222" /><circle cx="5" cy="11" r="2.300" fill="#cfe0f5" stroke="#222" /><path d="M9 4v9l2-2 2 4 2-1-2-4h3z" fill="#f7eda6" stroke="#333" stroke-width=".7" /></symbol>
      <symbol id="i-quick-select" viewBox="0 0 16 16"><path d="M.5 2.500h6v12h-6z" fill="#7fb068" stroke="#1c5a1a" stroke-width="1.300" /><path d="M6 4v10l2.500-2.500L10 15l2-1-1.500-3.500H14z" fill="#f4f4f4" stroke="#333" stroke-width=".7" /><path d="M13 0L9.500 5H12l-2 4 6-5.500h-3L15 0z" fill="#ffb62e" stroke="#c86a08" stroke-width=".5" /></symbol>
      <symbol id="i-point" viewBox="0 0 16 16"><path d="M8.500 1v5M8.500 11v5M1 8.500h5M11 8.500h5" stroke="#e4e4e4" /><circle cx="8.500" cy="8.500" r="2" fill="none" stroke="#e4e4e4" /></symbol>
      <symbol id="i-calc" viewBox="0 0 16 16"><path d="M3.500 1.500h10v13h-10z" fill="#eceef2" stroke="#333" /><path d="M5 3h7v2.500H5z" fill="#4a505c" /><path d="M5 7.500h7M5 9.500h7M5 11.500h7" stroke="#4a505c" stroke-dasharray="1 1" /></symbol>
      <symbol id="i-cut" viewBox="0 0 16 16"><path d="M3 1l8 10M13 1L5 11" stroke="#eee" stroke-width="1.800" /><circle cx="4" cy="12.500" r="2.300" fill="none" stroke="#222" stroke-width="1.500" /><circle cx="12" cy="12.500" r="2.300" fill="none" stroke="#222" stroke-width="1.500" /></symbol>
      <symbol id="i-copyclip" viewBox="0 0 16 16"><path d="M.5.500h7l3 3v9H.5z" fill="#e2e4ea" stroke="#333" /><path d="M5.500 3.500h6l4 4v8h-10z" fill="url(#g-white)" stroke="#222" /><path d="M11.500 3.500v4h4" fill="none" stroke="#222" /></symbol>

      <symbol id="s-grid" viewBox="0 0 16 16"><path d="M2.500 1v14M5.500 1v14M8.500 1v14M11.500 1v14M14.500 1v14M1 3.500h15M1 6.500h15M1 9.500h15M1 12.500h15" stroke="#2b8af5" /></symbol>
      <symbol id="s-snap" viewBox="0 0 16 16"><path d="M1 2.500h15M1 5.500h15M1 8.500h15M1 11.500h15M1 14.500h15" stroke="#b8b8b8" stroke-dasharray="1 2" /></symbol>
      <symbol id="s-ortho" viewBox="0 0 16 16"><path d="M2.500 2v11.500H15M2.500 9.500h4v4" fill="none" stroke="#c4c4c4" stroke-width="1.200" /></symbol>
      <symbol id="s-polar" viewBox="0 0 16 16"><circle cx="7" cy="8" r="6" fill="none" stroke="#c4c4c4" stroke-width="1.200" /><path d="M16 8.500H7L13 2M12 6l3 2.500-3 2.500" fill="none" stroke="#c4c4c4" stroke-width="1.200" /></symbol>
      <symbol id="s-iso" viewBox="0 0 16 16"><path d="M8.500 0v16M0 1l16 14" stroke="#b8b8b8" stroke-width="1.200" /></symbol>
      <symbol id="s-track" viewBox="0 0 16 16"><path d="M16 14.500H1L14 3" fill="none" stroke="#c4c4c4" stroke-width="1.200" /><path d="M5 8h4v4z" fill="#c4c4c4" /></symbol>
      <symbol id="s-osnap" viewBox="0 0 16 16"><path d="M3 3.500h11.500v11H2.500v-11" fill="none" stroke="#2b8af5" stroke-width="1.600" /><path d="M1 1h4v4H1z" fill="#1ec81e" stroke="#0a3d0a" /></symbol>
      <symbol id="s-annot" viewBox="0 0 16 16"><path d="M6 1h2l2 8 5 5v1.500h-3L7 11.500l-4 4H0V14l5-5z" fill="#2b8af5" /><circle cx="12" cy="4" r="3" fill="none" stroke="#2b8af5" stroke-width="1.500" /></symbol>
      <symbol id="s-annot-auto" viewBox="0 0 16 16"><path d="M6 1h2l1 8 5 5v1.500h-3L7 11.500l-4 4H0V14l5-5z" fill="#c4c4c4" /><path d="M12 0L10 4h2l-1 5 5-6h-2l1-3z" fill="#c4c4c4" /></symbol>
      <symbol id="s-annot-scale" viewBox="0 0 16 16"><path d="M7 1h2l1 8 5 5v1.500h-3L8 11.500l-4 4H1V14l5-5z" fill="#c4c4c4" /></symbol>
      <symbol id="s-gear" viewBox="0 0 16 16"><circle cx="8" cy="8" r="3.500" fill="none" stroke="#c4c4c4" stroke-width="3" /><path d="M8 2v3M8 11v3M2 8h3M11 8h3M4 4l2 2M12 4l-2 2M4 12l2-2M12 12l-2-2" stroke="#c4c4c4" stroke-width="2.400" /></symbol>
      <symbol id="s-plus" viewBox="0 0 16 16"><path d="M1 8h14M8 1v14" stroke="#c4c4c4" stroke-width="2" /></symbol>
      <symbol id="s-perf" viewBox="0 0 16 16"><circle cx="8" cy="8" r="7.200" fill="#0b5cae" stroke="#2b8af5" stroke-width="1.300" /><path d="M8 11l4-4" stroke="#7fc0ff" stroke-width="1.300" /></symbol>
      <symbol id="s-isolate" viewBox="0 0 16 16"><path d="M1.500 1.500h5v5h-5zM4 15.500l3.500-6 3.500 6z" fill="none" stroke="#c4c4c4" stroke-width="1.200" /><circle cx="12" cy="7.500" r="3" fill="none" stroke="#c4c4c4" stroke-width="1.200" /></symbol>
      <symbol id="s-clean" viewBox="0 0 16 16"><path d="M.5 2.500h15v11H.5z" fill="none" stroke="#d8d8d8" stroke-width="1.300" /><path d="M3 12V8l4 4zM13 4v4L9 4z" fill="#eee" /><path d="M4 11l3-3M12 5L9 8" stroke="#eee" stroke-width="1.300" /></symbol>
      <symbol id="s-menu" viewBox="0 0 16 16"><path d="M1 3h15M1 8h15M1 13h15" stroke="#c4c4c4" stroke-width="2" /></symbol>

      <symbol id="t-chrome" viewBox="0 0 32 32"><circle cx="16" cy="16" r="14.500" fill="#fbcb3f" /><path d="M3.500 8.500A14.500 14.500 0 0 1 29 9.500H16l-6 10z" fill="#de4a3e" /><path d="M3.500 8.500l6.700 11.500L16 23l-2 7.400A14.500 14.500 0 0 1 3.500 8.500z" fill="#2da25a" /><circle cx="16" cy="16" r="6.700" fill="#f6f6f6" /><circle cx="16" cy="16" r="5.300" fill="#4b8bf0" /></symbol>
      <symbol id="t-explorer" viewBox="0 0 32 32"><path d="M1 3h9l2 3h10l2-1h6v20H1z" fill="#eacb6c" stroke="#ba9238" stroke-width=".6" /><path d="M4 2h8v8H4zM13 4h9v8h-9zM21 6h9v8h-9z" fill="#fbfbf5" stroke="#c9a54c" stroke-width=".5" /><path d="M5 3h3v2H5z" fill="#2ab14a" /><path d="M14 5h3v2h-3z" fill="#d9372e" /><path d="M22 7h3v2h-3z" fill="#2a9be0" /><path d="M0 8h11l3 3h18v17H0z" fill="url(#g-gold)" /><path d="M5 31v-9q0-3 3-3h16q3 0 3 3v9h-6v-5H11v5z" fill="#8fcbe9" stroke="#3e93bd" stroke-width=".7" /></symbol>
      <symbol id="t-notes" viewBox="0 0 32 32"><path d="M4 3l13 4-4 16-13-4z" fill="#8cc97c" /><path d="M7 9h14v18H7z" fill="#9dcaf2" /><path d="M12 11l16-4 4 16-16 5z" fill="#f6dc67" stroke="#d5b43e" stroke-width=".5" /></symbol>
      <symbol id="t-movie" viewBox="0 0 32 32"><path d="M5 4h16v24H5q-7-12 0-24z" fill="#3f94c9" stroke="#1d4e78" /><path d="M8 6h10v6H8zM7 13h10v6H7zM8 20h10v6H8z" fill="#ef7a24" stroke="#a13f08" stroke-width=".6" /><path d="M4 8h2M3 12h2M3 16h2M3 20h2M4 24h2M19 8h2M19 12h2M19 16h2M19 20h2M19 24h2" stroke="#d9eefb" stroke-width="1.500" /><path d="M26 5q-7 4-4 11t-2 11q6 0 7-6t5-3" fill="none" stroke="#e9ac52" stroke-width="2.400" /></symbol>
      <symbol id="t-notepad" viewBox="0 0 32 32"><path d="M2.500 3h22v27h-22z" fill="url(#g-green)" stroke="#555" stroke-width=".8" /><path d="M3 3h21" stroke="#777" stroke-width="2" stroke-dasharray="1 1" /><path d="M4 7h19M4 10h19" stroke="#c6d8e6" stroke-width=".8" /><path d="M19 27l1-4L28 3l3 1-8 20z" fill="#f2b632" stroke="#7c4c16" stroke-width=".7" /><path d="M28 3l1-2 3 1-1 2z" fill="#a52a2a" /></symbol>
      <symbol id="t-autocad" viewBox="0 0 32 32"><path d="M0 0h32v32H0z" fill="url(#g-pink)" /><path d="M6 23L13 6q3-4 6 0l7 17q-1 2-5 2l-2-4q-3-2-6 0l-2 4q-4 0-5-2z" fill="url(#g-red)" /><path d="M13 20q3-3 6 0z" fill="#7e0b0d" /></symbol>
    </svg>
  </div>
</template>

<script setup>
const quickTools = [
  { icon: 'new', name: 'New' },
  { icon: 'open', name: 'Open' },
  { icon: 'save', name: 'Save' },
  { icon: 'saveas', name: 'Save As' },
  { icon: 'print', name: 'Plot' },
  { icon: 'undo', name: 'Undo', caret: true },
  { icon: 'redo', name: 'Redo', caret: true },
  { icon: 'workspace', name: 'Workspace' },
]

const menus = ['File', 'Edit', 'View', 'Insert', 'Format', 'Tools', 'Draw', 'Dimension', 'Modify', 'Parametric', 'Window', 'Help', 'Express']
const ribbonTabs = ['Home', 'Insert', 'Annotate', 'View', 'Manage', 'Output', 'Add-ins', 'Autodesk 360', 'Express Tools', 'BIM 360', 'Featured Apps']

const panels = [
  {
    id: 'draw',
    name: 'Draw',
    parts: [
      { big: 'line', label: 'Line' },
      { big: 'polyline', label: 'Polyline' },
      { big: 'circle', label: 'Circle', caret: true },
      { big: 'arc', label: 'Arc', caret: true },
      { col: [{ icon: 'rect', caret: true }, { icon: 'ellipse', caret: true }, { icon: 'hatch', caret: true }] },
    ],
  },
  {
    id: 'modify',
    name: 'Modify',
    parts: [
      { col: [{ icon: 'move', label: 'Move' }, { icon: 'copy', label: 'Copy' }, { icon: 'stretch' }] },
      { col: [{ icon: 'rotate' }, { icon: 'mirror' }, { icon: 'scale' }] },
      { col: [{ icon: 'trim', caret: true }, { icon: 'fillet', caret: true }, { icon: 'array', caret: true }] },
      { col: [{ icon: 'erase' }, { icon: 'explode' }, { icon: 'offset' }] },
    ],
  },
  {
    id: 'annotation',
    name: 'Annotation',
    parts: [
      { big: 'text', label: 'Text', caret: true },
      { col: [{ icon: 'dim', caret: true }, { icon: 'leader', caret: true }, { icon: 'table' }] },
    ],
  },
  { id: 'layers', name: 'Layers', parts: [{ big: 'layers', label: 'Layer Properties' }, { layers: true }] },
  {
    id: 'block',
    name: 'Block',
    parts: [
      { big: 'insert', label: 'Insert' },
      { col: [{ icon: 'blk-new' }, { icon: 'blk-edit' }, { icon: 'blk-attr', caret: true }] },
    ],
  },
  { id: 'properties', name: 'Properties', launcher: true, parts: [{ big: 'match', label: 'Match Properties' }, { props: true }] },
  {
    id: 'groups',
    name: 'Groups',
    parts: [
      { big: 'group', label: 'Group' },
      { col: [{ icon: 'grp-edit' }, { icon: 'grp-add' }, { icon: 'grp-select', on: true }] },
    ],
  },
  {
    id: 'utilities',
    name: 'Utilities',
    parts: [
      { big: 'measure', label: 'Measure', caret: true },
      { col: [{ icon: 'quick-select' }, { icon: 'point' }, { icon: 'calc' }] },
    ],
  },
  {
    id: 'clipboard',
    name: 'Clipboard',
    plain: true,
    parts: [
      { big: 'paste', label: 'Paste', caret: true },
      { col: [{ icon: 'cut' }, { icon: 'copyclip' }] },
    ],
  },
  { id: 'view', name: 'View', launcher: true, parts: [{ big: 'base', label: 'Base', caret: true }] },
]

const layerTools = [
  'lay-off', 'lay-iso', 'lay-freeze', 'lay-lock', 'lay-current',
  'lay-on', 'lay-uniso', 'lay-thaw', 'lay-unlock', 'lay-match',
]

const propRows = [
  { icon: 'wheel', name: 'Object color', sample: 'swatch' },
  { icon: 'weights', name: 'Lineweight', sample: 'rule' },
  { icon: 'types', name: 'Linetype', sample: 'rule' },
]

const history = [
  'Specify next point or [Arc/Halfwidth/Length/Undo/Width]:',
  'Specify next point or [Arc/Close/Halfwidth/Length/Undo/Width]:',
  'Command: nil',
]

const layouts = ['Model', 'Layout1', 'Layout2']

// 'v' is a drop-down arrow, '|' a divider
const statusGroups = [
  [{ text: 'MODEL' }],
  ['grid', 'snap', 'v'],
  ['ortho', 'polar', 'v', 'iso', 'v', '|', 'track', 'osnap', 'v'],
  ['annot', 'annot-auto', 'annot-scale', { text: '1:1' }, 'v'],
  ['gear', 'v', '|', 'plus'],
  ['perf'],
  ['isolate'],
  ['clean', 'menu'],
]

const tasks = ['chrome', 'explorer', 'notes', 'movie', 'notepad', 'autocad']

// Grid: every fifth line is a major one
const STEP = 22.9
const gridLines = (origin, count) =>
  Array.from({ length: count }, (_, i) => ({
    at: Math.round(origin + (i - 5) * STEP),
    major: i % 5 === 0,
  }))

const gridX = gridLines(58, 120)
const gridY = gridLines(61, 70)

const SIDES = 46
const circlePoints = Array.from({ length: SIDES }, (_, i) => {
  const a = Math.PI / 2 + (i * 2 * Math.PI) / SIDES
  return `${(422 + 150.5 * Math.cos(a)).toFixed(1)},${(264 + 150.5 * Math.sin(a)).toFixed(1)}`
}).join(' ')
</script>

<style>
body {
  background: #373737;
}
</style>

<style scoped>
.desktop {
  display: flex;
  flex-direction: column;
  min-height: 100vh;
  overflow: hidden;
  font-family: "Open Sans", "Noto Sans", sans-serif;
  font-size: 12px;
  line-height: 16px;
  color: #f0f0f0;
  background: #373737;
}

.desktop * {
  box-sizing: border-box;
}

button,
input,
select {
  margin: 0;
  padding: 0;
  border: 0;
  background: none;
  color: inherit;
  font: inherit;
}

a {
  color: inherit;
  text-decoration: none;
}

.defs {
  position: absolute;
  width: 0;
  height: 0;
}

.ic {
  flex: none;
  display: block;
  width: 16px;
  height: 16px;
}

.caret {
  flex: none;
  width: 0;
  height: 0;
  border: 4px solid transparent;
  border-top: 5px solid #f0f0f0;
  border-bottom: 0;
}

.caret.small {
  border-width: 3px;
  border-top-width: 4px;
  border-bottom-width: 0;
}

.caret.dark {
  border-top-color: #33363c;
}

.caret.grey {
  border-top-color: #888;
}

.caret.up {
  border-top: 0;
  border-bottom: 5px solid #111;
}

.caret.light {
  border-bottom-color: #f0f0f0;
}

/* Title and menu */
.top {
  display: flex;
  height: 45px;
  background: linear-gradient(#a0a0a0 24px, #a8a8a8 24px, #5e5e5e);
}

.app-button {
  display: flex;
  align-items: center;
  gap: 3px;
  width: 41px;
  height: 41px;
  padding-left: 4px;
  border: 1px solid #111;
  background: linear-gradient(#c0c0c0, #7c7c7c);
}

.app-logo {
  width: 24px;
  height: 26px;
}

.top-rows {
  flex: 1;
  min-width: 0;
}

.title-row {
  display: flex;
  height: 24px;
  background: #ebebeb;
}

.quick {
  display: flex;
  align-items: center;
  width: 238px;
  padding-left: 9px;
  border-top: 1px solid #666;
  border-right: 1px solid #777;
  background: linear-gradient(#a8a8a8, #8a8a8a);
}

.quick-btn {
  display: flex;
  align-items: center;
  width: 24px;
}

.quick-btn.with-caret {
  gap: 6px;
  width: 36px;
}

.quick-more {
  display: flex;
  flex-direction: column;
  align-items: center;
  gap: 2px;
  width: 24px;
}

.bar {
  width: 8px;
  height: 2px;
  background: #f4f4f4;
}

.title {
  flex: 1;
  display: flex;
  justify-content: center;
  gap: 16px;
  margin: 0;
  font-size: 15px;
  font-weight: 400;
  line-height: 24px;
  color: #1c1c1c;
  white-space: nowrap;
}

.info {
  display: flex;
  align-items: center;
  width: 445px;
  border-top: 1px solid #666;
  background: linear-gradient(#a8a8a8, #858585);
}

.info-toggle {
  width: 0;
  height: 0;
  margin: 0 5px 0 4px;
  border: 4px solid transparent;
  border-left: 4px solid #fff;
  border-right: 0;
}

.search {
  width: 181px;
  height: 22px;
  padding: 0 3px;
  border: 1px solid #3a3a3a;
  background: #757575;
  font-style: italic;
  font-size: 11px;
}

.search::placeholder {
  color: #cfcfcf;
  opacity: 1;
}

.info-btn {
  display: flex;
  align-items: center;
  gap: 5px;
  margin-left: 4px;
}

.info-btn.wide {
  margin-left: 8px;
}

.sign-in {
  display: flex;
  align-items: center;
  width: 111px;
  margin: 0 4px 0 8px;
  gap: 5px;
}

.sign-in .caret {
  margin-left: auto;
}

.info-sep {
  width: 1px;
  height: 14px;
  margin-left: 10px;
  background: #b0b0b0;
}

.help {
  width: 17px;
  height: 17px;
  border: 1px solid #1e222b;
  border-radius: 50%;
  background: #eff2f8;
  font-weight: 700;
  line-height: 15px;
  text-align: center;
  color: #2457b8;
}

.win-buttons {
  display: flex;
  width: 122px;
  padding-left: 23px;
}

.win-buttons button {
  width: 26px;
  height: 19px;
  padding-left: 3px;
}

.win-buttons .close {
  width: 45px;
  padding-left: 14px;
  background: #bcbcbc;
}

.menu-row {
  display: flex;
  align-items: center;
  gap: 22px;
  height: 21px;
  padding: 0 5px 0 14px;
  border-top: 1px solid #3a3a3a;
}

.menu-row a {
  color: #fff;
}

.mdi {
  margin-left: auto;
}

.mdi svg {
  display: block;
  width: 44px;
  height: 12px;
}

/* Ribbon */
.ribbon-tabs {
  display: flex;
  align-items: flex-end;
  height: 20px;
  padding-left: 4px;
  border-top: 1px solid #2e2e2e;
  background: #535353;
}

.ribbon-tabs a {
  height: 18px;
  padding: 0 8px 0 9px;
  line-height: 18px;
  color: #d4d4d4;
}

.ribbon-tabs a.active {
  border: 1px solid #2a2a2a;
  border-bottom: 0;
  border-radius: 2px 2px 0 0;
  padding: 0 8px;
  line-height: 17px;
  background: linear-gradient(#747474, #5e5e5e);
  color: #fff;
}

.ribbon-min {
  display: flex;
  align-items: center;
  gap: 4px;
  height: 18px;
  margin-left: 20px;
}

.ribbon-min svg {
  width: 14px;
  height: 8px;
}

.ribbon {
  display: flex;
  height: 99px;
  padding-left: 1px;
  border-top: 1px solid #2c2c2c;
  border-bottom: 1px solid #2c2c2c;
  background: #5c5c5c;
  box-shadow: 0 1px #757575;
}

.panel {
  flex: none;
  display: flex;
  flex-direction: column;
  border-left: 1px solid #383838;
  box-shadow: inset 1px 0 #6c6c6c;
}

.draw { width: 224px; }
.modify { width: 169px; }
.annotation { width: 86px; }
.layers { width: 274px; }
.block { width: 79px; }
.properties { width: 222px; }
.groups { width: 69px; }
.utilities { width: 97px; }
.clipboard { width: 80px; }
.view { width: 63px; }

.panel-body {
  flex: 1;
  display: grid;
  align-items: start;
  padding-top: 4px;
}

.draw .panel-body { grid-template-columns: 41px 46px 54px 38px 1fr; }
.modify .panel-body { grid-template-columns: 65px 29px 41px 1fr; }
.annotation .panel-body { grid-template-columns: 46px 1fr; }
.layers .panel-body { grid-template-columns: 62px 1fr; }
.block .panel-body { grid-template-columns: 39px 1fr; }
.properties .panel-body { grid-template-columns: 61px 1fr; }
.groups .panel-body { grid-template-columns: 42px 1fr; }
.utilities .panel-body { grid-template-columns: 68px 1fr; }
.clipboard .panel-body { grid-template-columns: 52px 1fr; }

.big {
  display: flex;
  flex-direction: column;
  align-items: center;
  padding-top: 2px;
}

.ic-big {
  width: 32px;
  height: 32px;
  margin-bottom: 4px;
}

.glyph {
  height: 36px;
  font-size: 38px;
  line-height: 34px;
  color: #e4e4e4;
}

.big-label {
  line-height: 15px;
  text-align: center;
}

.big .caret {
  margin-top: 2px;
}

.col {
  display: flex;
  flex-direction: column;
  padding-left: 6px;
}

.tool {
  display: flex;
  align-items: center;
  gap: 6px;
  height: 24px;
}

.groups .col {
  padding-left: 0;
}

.groups .tool {
  width: 24px;
  padding-left: 4px;
}

.groups .tool.on {
  height: 21px;
  margin-top: 1px;
  padding-left: 3px;
  border: 1px solid #1f3860;
  background: linear-gradient(#7ba0d4, #4f74ab);
}

.combo {
  display: flex;
  align-items: center;
  height: 22px;
  padding-right: 2px;
  border: 1px solid #343434;
  background: linear-gradient(#545454, #6c6c6c);
}

.combo select {
  flex: 1;
  min-width: 0;
  appearance: none;
  height: 20px;
  line-height: 20px;
}

.layer-tools {
  padding: 1px 3px 0 0;
}

.layer-state {
  width: 80px;
  height: 20px;
}

.layer-grid {
  display: grid;
  grid-template-columns: repeat(5, 24px);
  padding: 1px 0 0 5px;
}

.props {
  display: grid;
  gap: 1px;
  padding: 1px 2px 0 3px;
}

.prop {
  display: flex;
  align-items: center;
  gap: 2px;
}

.prop .combo {
  flex: 1;
}

.swatch {
  width: 16px;
  height: 16px;
  margin: 0 10px 0 12px;
  border: 1px solid #bbb;
  background: #fff;
}

.rule {
  width: 59px;
  height: 1px;
  margin: 0 1px 0 9px;
  background: #fff;
}

.panel-title {
  position: relative;
  display: flex;
  align-items: center;
  justify-content: center;
  gap: 5px;
  height: 18px;
  margin: 0 1px;
  background: #4a4a4a;
}

.view .panel-title {
  padding-right: 14px;
}

.launcher {
  position: absolute;
  right: 5px;
  bottom: 5px;
  width: 6px;
  height: 6px;
}

/* Drawing tabs */
.file-tabs {
  display: flex;
  align-items: flex-end;
  height: 30px;
  padding-left: 9px;
  border-bottom: 4px solid #5c5c5c;
  background: #373737;
}

.file-tab {
  position: relative;
  display: flex;
  align-items: center;
  justify-content: space-between;
  width: 146px;
  height: 22px;
  padding: 2px 23px 0;
}

.file-tab > * {
  position: relative;
}

.file-tab .shape,
.layout-tab .shape {
  position: absolute;
  inset: 0;
  width: 100%;
  height: 100%;
}

.tab-close {
  width: 8px;
  height: 8px;
}

.new-tab,
.new-layout {
  display: block;
  height: 19px;
}

.new-tab {
  margin-left: -4px;
}

.new-tab svg {
  display: block;
  width: 24px;
  height: 15px;
}

/* Model space */
.canvas {
  position: relative;
  flex: 1;
  min-height: 400px;
  background: #212830;
}

.drawing {
  position: absolute;
  inset: 0;
  width: 100%;
  height: 100%;
}

.view-label {
  position: absolute;
  top: 6px;
  left: 3px;
}

.ucs {
  position: absolute;
  left: 0;
  bottom: 0;
  width: 90px;
  height: 84px;
}

.view-cube {
  position: absolute;
  top: 11px;
  right: 17px;
  width: 100px;
  text-align: center;
}

.view-cube > svg {
  display: block;
  width: 100px;
  height: 94px;
}

.compass {
  font: 700 14px "Liberation Sans", sans-serif;
  text-anchor: middle;
  fill: #b4b7b9;
}

.cube-face {
  font: 700 10px "Open Sans", sans-serif;
  text-anchor: middle;
  fill: #41464c;
}

.wcs {
  display: flex;
  align-items: center;
  gap: 6px;
  width: 48px;
  height: 17px;
  margin: 15px 0 0 25px;
  padding: 0 4px;
  border: 1px solid #a3a6b2;
  border-radius: 4px;
  background: #8b8e9b;
  font: 11px "Liberation Sans", sans-serif;
  color: #41454f;
}

.wcs svg {
  flex: none;
  width: 10px;
  height: 6px;
}

.nav-bar {
  position: absolute;
  top: 163px;
  right: 12px;
  width: 32px;
  height: 212px;
  border-radius: 4px;
  background: #5a5f63;
  box-shadow: 0 0 2px #111;
}

.nav-bar svg {
  display: block;
}

.command {
  position: absolute;
  left: 50%;
  bottom: 0;
  width: 514px;
  margin-left: -257px;
  display: flex;
  flex-direction: column;
  align-items: flex-start;
}

.history {
  height: 15px;
  margin: 0 0 5px 60px;
  padding: 0 2px;
  border-radius: 2px;
  background: #5f6162;
  font: 12px/16px "Liberation Mono", monospace;
  white-space: nowrap;
  color: #f4f4f4;
}

.history.age0 {
  background: #4d5053;
  color: #a9abac;
}

.history.age1 {
  background: #55585a;
  color: #d2d3d4;
}

.history.age2 {
  margin-bottom: 3px;
}

.command-bar {
  display: flex;
  align-items: center;
  width: 100%;
  height: 28px;
  padding-right: 3px;
  border: 1px solid #777;
  border-radius: 3px 3px 0 0;
  background: #fff;
  color: #111;
}

.command-handle {
  display: flex;
  align-items: center;
  align-self: stretch;
  width: 53px;
  margin-right: 4px;
  padding-left: 3px;
  background: linear-gradient(#7b7b7b, #3c3c3c);
}

.grip {
  width: 6px;
  height: 18px;
  margin-right: 5px;
}

.cmd-x {
  width: 10px;
  height: 10px;
  margin-right: 9px;
}

.prompt {
  width: 16px;
  height: 14px;
  margin-right: 3px;
}

.text-cursor {
  width: 1px;
  height: 15px;
  margin-left: 4px;
  background: #000;
}

.command-bar input {
  flex: 1;
  min-width: 0;
  height: 20px;
}

.window-edge {
  position: absolute;
  top: 0;
  right: 0;
  bottom: 0;
  width: 8px;
  border-right: 1px solid #35c4f4;
  background: linear-gradient(#a9c8ee, #e3edf9 90px, #b7cbe8 90px);
}

/* Layout tabs and status bar */
.status {
  display: flex;
  justify-content: space-between;
  height: 29px;
  border-top: 1px solid #5c5c5c;
  background: #373737;
}

.layout-tabs {
  display: flex;
  padding-left: 6px;
}

.layout-tab {
  position: relative;
  width: 68px;
  height: 18px;
  margin-right: -5px;
  color: #bdbdbd;
}

.layout-tab span {
  position: relative;
}

.layout-tab.active {
  z-index: 1;
  font-weight: 700;
  color: #fff;
}

.new-layout svg {
  display: block;
  width: 24px;
  height: 17px;
  margin-left: 8px;
}

.status-groups {
  display: flex;
  gap: 1px;
  padding-right: 1px;
}

.status-group {
  display: flex;
  align-items: center;
  height: 27px;
  border: 1px solid #7b7b7b;
  background: #525252;
}

.status-btn {
  display: flex;
  justify-content: center;
  width: 24px;
}

.status-btn.isolate {
  width: 30px;
}

.drop {
  display: flex;
  justify-content: center;
  width: 15px;
}

.status-text {
  width: 47px;
  color: #fff;
}

.status-text.narrow {
  width: 18px;
}

.divider {
  align-self: stretch;
  width: 1px;
  background: #7b7b7b;
}

/* Taskbar */
.taskbar {
  display: flex;
  height: 40px;
  background: #54575a;
}

.start {
  width: 52px;
  padding: 0 0 0 12px;
}

.start svg {
  display: block;
  width: 26px;
  height: 26px;
}

.tasks {
  display: flex;
  gap: 4px;
  padding-top: 1px;
}

.task {
  display: flex;
  align-items: center;
  justify-content: center;
  width: 58px;
  height: 38px;
  border: 1px solid #999c9f;
  background: #707376;
}

.task svg {
  width: 32px;
  height: 32px;
}

.task.explorer {
  padding-right: 5px;
  background: linear-gradient(90deg, #707376 52px, #999c9f 52px 53px, #54575a 53px 54px, #707376 54px);
}

.task.autocad {
  border-color: #e4e5e6;
  background: #9c9fa1;
}

.notepad-text {
  font: 700 9px "Open Sans", sans-serif;
  text-anchor: middle;
  fill: #111;
}

.tray {
  display: flex;
  align-items: center;
  margin-left: auto;
  padding: 2px 18px 0 0;
  color: #fff;
}

.tray .ic {
  margin: 0 14px 0 12px;
}

.lang {
  margin-right: 12px;
}

.clock {
  display: flex;
  flex-direction: column;
  align-items: center;
  line-height: 17px;
}
</style>
